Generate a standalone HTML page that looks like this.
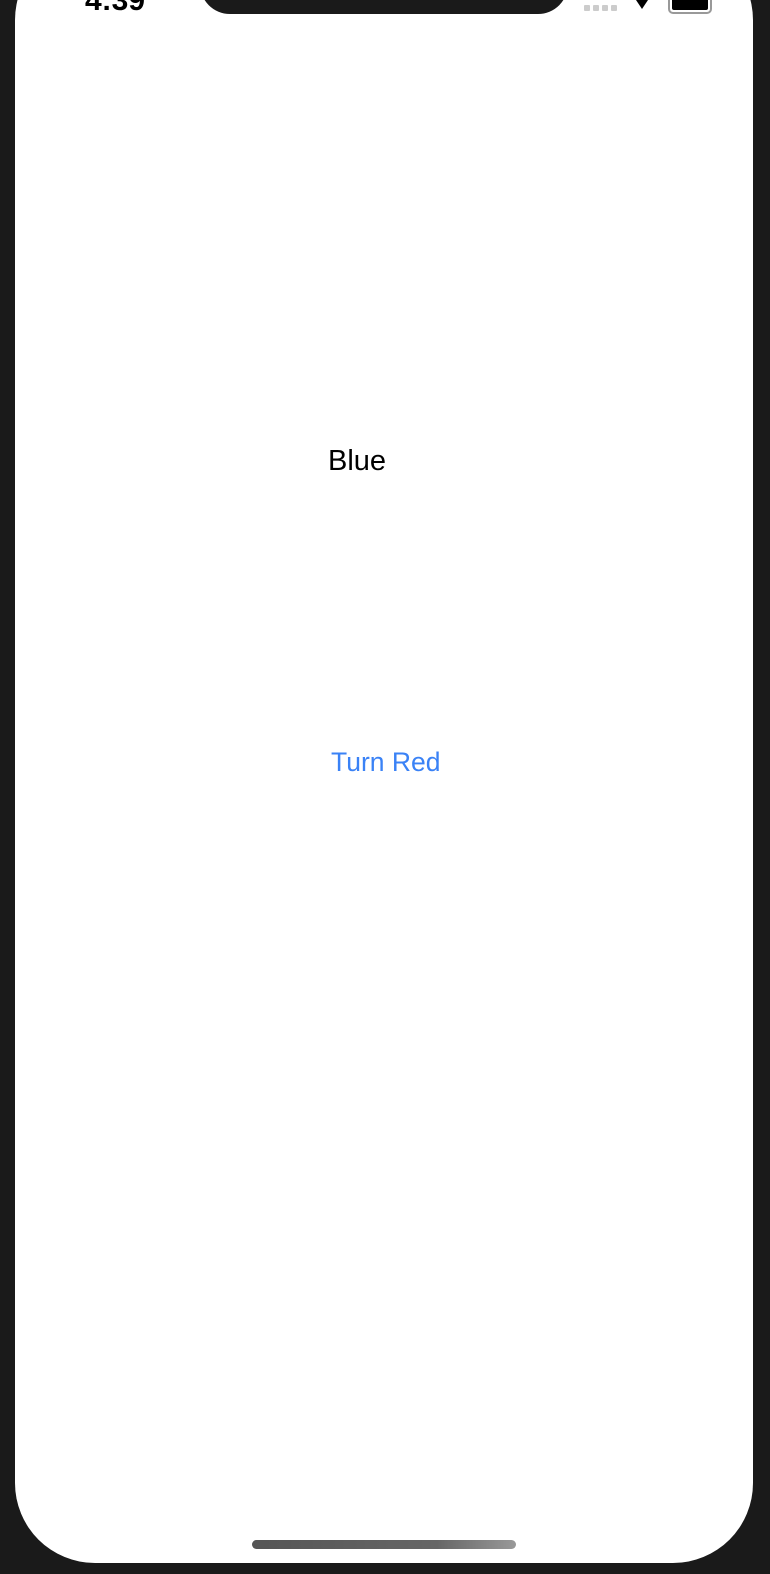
<!DOCTYPE html>
<html><head><style>
html,body{margin:0;padding:0;width:770px;height:1574px;overflow:hidden;background:#1a1a1a;font-family:"Liberation Sans",sans-serif;}
.screen{position:absolute;left:15px;top:-60px;width:738px;height:1623px;background:#fff;border-radius:80px;}
.notch{position:absolute;left:200px;top:-40px;width:368px;height:54px;background:#1a1a1a;border-radius:0 0 30px 30px;}
.time{position:absolute;left:85px;top:-14px;font-size:30px;font-weight:bold;color:#000;line-height:30px;}
.t{position:absolute;white-space:nowrap;line-height:1;}
.home{position:absolute;left:252px;top:1540px;width:264px;height:9px;border-radius:5px;background:linear-gradient(90deg,#555,#666 70%,#999);}
</style></head><body>
<div class="screen"></div>
<div class="notch"></div>
<div class="time">4:39</div>
<div style="position:absolute;left:584px;top:5px;width:34px;height:6px;display:flex;gap:3px">
<div style="width:6px;height:6px;background:#ccc;border-radius:1px"></div><div style="width:6px;height:6px;background:#ccc;border-radius:1px"></div><div style="width:6px;height:6px;background:#ccc;border-radius:1px"></div><div style="width:6px;height:6px;background:#ccc;border-radius:1px"></div></div>
<svg style="position:absolute;left:632px;top:0" width="20" height="12"><path d="M4 0 L10 9 L16 0 Z" fill="#000"/></svg>
<div style="position:absolute;left:668px;top:-10px;width:40px;height:20px;border:2px solid #999;border-radius:5px;background:#fff"><div style="margin:2px;height:16px;background:#000;border-radius:2px"></div></div>
<div class="t" style="left:328px;top:447px;font-size:29px;color:#000">Blue</div>
<div class="t" style="left:331px;top:749px;font-size:26.5px;color:#3a82f6">Turn Red</div>
<div class="home"></div>
</body></html>
